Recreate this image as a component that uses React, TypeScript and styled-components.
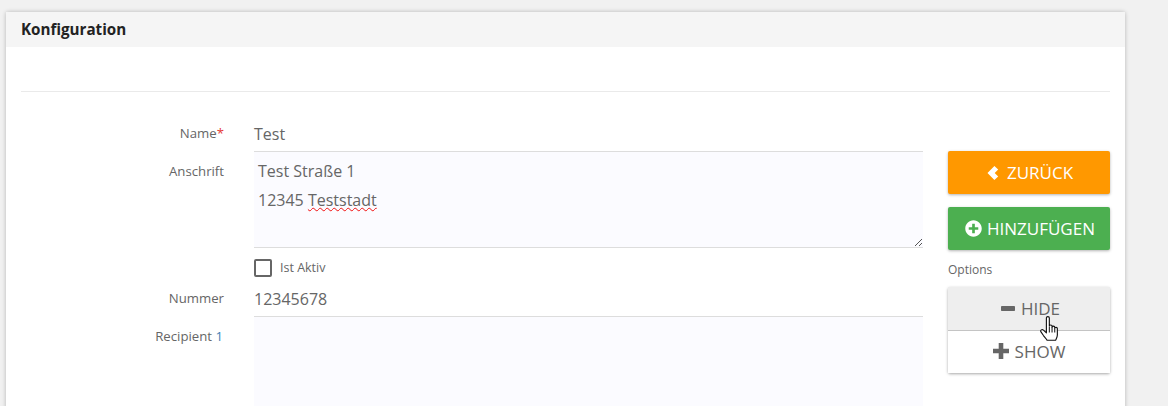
import React from 'react';
import styled, { createGlobalStyle } from 'styled-components';
import { FaPlusCircle } from 'react-icons/fa';

const GlobalStyle = createGlobalStyle`
  html, body {
    margin: 0;
    height: 406px;
    overflow: hidden;
    background: #f1f1f1;
    font-family: "Open Sans", "Liberation Sans", sans-serif;
  }
  * { box-sizing: border-box; }
`;

const Page = styled.div`
  height: 406px;
  overflow: hidden;
  padding: 12px 43px 0 6px;
`;

const Card = styled.section`
  height: 500px;
  background: #fff;
  border-radius: 2px 2px 0 0;
  box-shadow: 0 0 4px rgba(0, 0, 0, 0.25);
`;

const CardHeader = styled.header`
  height: 35px;
  padding: 0 15px 2px;
  display: flex;
  align-items: center;
  background: #f5f5f5;
  color: #222;
  font-size: 15.2px;
  font-weight: 700;
`;

const CardBody = styled.div`
  padding: 44px 15px 0;
`;

const Divider = styled.hr`
  margin: 0 0 27px;
  border: 0;
  border-top: 1px solid #eaeaea;
`;

const Columns = styled.div`
  display: grid;
  grid-template-columns: 902px 162px;
  column-gap: 25px;
`;

const Form = styled.div`
  display: grid;
  grid-template-columns: 203px 1fr;
  column-gap: 30px;
  align-content: start;
`;

const Label = styled.label<{ $top: number }>`
  padding-top: ${(p) => p.$top}px;
  text-align: right;
  color: #666;
  font-size: 13.2px;
  line-height: 17px;
`;

const Required = styled.span`
  color: #e53935;
`;

const Count = styled.span`
  color: #3d7fb5;
  margin-right: 1px;
`;

const Input = styled.div`
  height: 33px;
  padding-top: 4px;
  border-bottom: 1px solid #ddd;
  color: #666;
  font-size: 16px;
  line-height: 22px;
`;

const TextArea = styled.div<{ $height: number }>`
  position: relative;
  height: ${(p) => p.$height}px;
  padding: 5px 4px;
  background: #fbfbff;
  border-bottom: 1px solid #ddd;
  color: #666;
  font-size: 16px;
  line-height: 29px;
`;

const Misspelled = styled.span`
  text-decoration: underline wavy #f01010 1px;
  text-decoration-skip-ink: none;
  text-underline-offset: 1px;
`;

const ResizeHandle = styled.svg`
  position: absolute;
  right: 0;
  bottom: 0;
`;

const Spacer = styled.div``;

const CheckRow = styled.div`
  height: 53px;
  padding-top: 11px;
  display: flex;
  align-items: flex-start;
  gap: 8px;
`;

const CheckBox = styled.span`
  width: 18px;
  height: 18px;
  border: 2px solid #666;
  border-radius: 2px;
  background: #fff;
`;

const CheckLabel = styled.span`
  color: #666;
  font-size: 12.5px;
  line-height: 18px;
`;

const NumberInput = styled(Input)`
  margin-top: -17px;
`;

const NumberLabel = styled(Label)`
  margin-top: -17px;
`;

const Side = styled.aside`
  padding-top: 32px;
  display: flex;
  flex-direction: column;
`;

const ActionButton = styled.button<{ $bg: string; $gap: number }>`
  height: 43px;
  margin-bottom: 13px;
  padding: 0 0 0 2px;
  display: flex;
  align-items: center;
  justify-content: center;
  gap: ${(p) => p.$gap}px;
  border: 0;
  border-radius: 2px;
  background: ${(p) => p.$bg};
  color: #fff;
  font-family: inherit;
  font-size: 17px;
  box-shadow: 0 1px 3px rgba(0, 0, 0, 0.3);
`;

const OptionsLabel = styled.div`
  margin: -2px 0 9px;
  color: #666;
  font-size: 12px;
  line-height: 17px;
`;

const ToggleGroup = styled.div`
  display: flex;
  flex-direction: column;
  border-radius: 2px;
  box-shadow: 0 1px 3px rgba(0, 0, 0, 0.35);
`;

const ToggleButton = styled.button<{ $active?: boolean }>`
  position: relative;
  z-index: ${(p) => (p.$active ? 1 : 0)};
  height: ${(p) => (p.$active ? 44 : 42)}px;
  padding: ${(p) => (p.$active ? '0 0 0 3px' : '0 0 2px')};
  display: flex;
  align-items: center;
  justify-content: center;
  gap: 6px;
  border: 0;
  border-bottom: ${(p) => (p.$active ? '1px solid #c4c4c4' : '0')};
  background: ${(p) => (p.$active ? '#eeeeee' : '#fff')};
  color: #666;
  font-family: inherit;
  font-size: 17px;
`;

const Pointer = styled.svg`
  position: absolute;
  left: 92px;
  top: 29px;
`;

const ChevronIcon = () => (
  <svg width="12" height="14" viewBox="0 0 12 14" fill="currentColor">
    <path d="M7.4 0 11.2 3.6 7.7 7 11.2 10.4 7.4 14 0.5 7Z" />
  </svg>
);

const MinusIcon = () => (
  <svg width="14" height="5" viewBox="0 0 14 5" fill="currentColor">
    <rect width="14" height="5" rx="0.8" />
  </svg>
);

const PlusIcon = () => (
  <svg width="16" height="16" viewBox="0 0 16 16" fill="currentColor">
    <path d="M5.7 0h4.6v5.7H16v4.6h-5.7V16H5.7v-5.7H0V5.7h5.7Z" />
  </svg>
);

export default function App() {
  return (
    <>
      <GlobalStyle />
      <Page>
        <Card>
          <CardHeader>Konfiguration</CardHeader>
          <CardBody>
            <Divider />
            <Columns>
              <Form>
                <Label $top={6}>
                  Name<Required>*</Required>
                </Label>
                <Input>Test</Input>
                <Label $top={11}>Anschrift</Label>
                <TextArea $height={96}>
                  Test Straße 1
                  <br />
                  12345 <Misspelled>Teststadt</Misspelled>
                  <ResizeHandle width="10" height="10" viewBox="0 0 10 10">
                    <path d="M9 2 2 9M9 6 6 9" stroke="#555" strokeWidth="1" />
                  </ResizeHandle>
                </TextArea>
                <Spacer />
                <CheckRow>
                  <CheckBox />
                  <CheckLabel>Ist Aktiv</CheckLabel>
                </CheckRow>
                <NumberLabel $top={6}>Nummer</NumberLabel>
                <NumberInput>12345678</NumberInput>
                <Label $top={11}>
                  Recipient <Count>1</Count>
                </Label>
                <TextArea $height={96} />
              </Form>
              <Side>
                <ActionButton $bg="#ff9800" $gap={8}>
                  <ChevronIcon />
                  ZURÜCK
                </ActionButton>
                <ActionButton $bg="#4caf50" $gap={5}>
                  <FaPlusCircle size={17} />
                  HINZUFÜGEN
                </ActionButton>
                <OptionsLabel>Options</OptionsLabel>
                <ToggleGroup>
                  <ToggleButton $active>
                    <MinusIcon />
                    HIDE
                    <Pointer width="19" height="26" viewBox="0.5 0.5 16.5 23">
                      <path
                        d="M6 2.2c0-1.6 2.6-1.6 2.6 0v7.2c0-1.3 2.4-1.3 2.4 0v1c0-1.2 2.4-1.2 2.4 0v1c0-1.1 2.3-1.1 2.3.2v5.6c0 2-1 3.4-1.6 4.8H6.6c-.8-1.6-2-2.6-3.2-4.2L1.2 14.5c-.9-1.4 1-2.7 2.2-1.5L6 15.4V2.2Z"
                        fill="#fff"
                        stroke="#111"
                        strokeWidth="1"
                        strokeLinejoin="round"
                      />
                      <path d="M8.6 10v5M11 10.5v4.5M13.4 11.5V15" stroke="#111" strokeWidth="0.9" />
                    </Pointer>
                  </ToggleButton>
                  <ToggleButton>
                    <PlusIcon />
                    SHOW
                  </ToggleButton>
                </ToggleGroup>
              </Side>
            </Columns>
          </CardBody>
        </Card>
      </Page>
    </>
  );
}
